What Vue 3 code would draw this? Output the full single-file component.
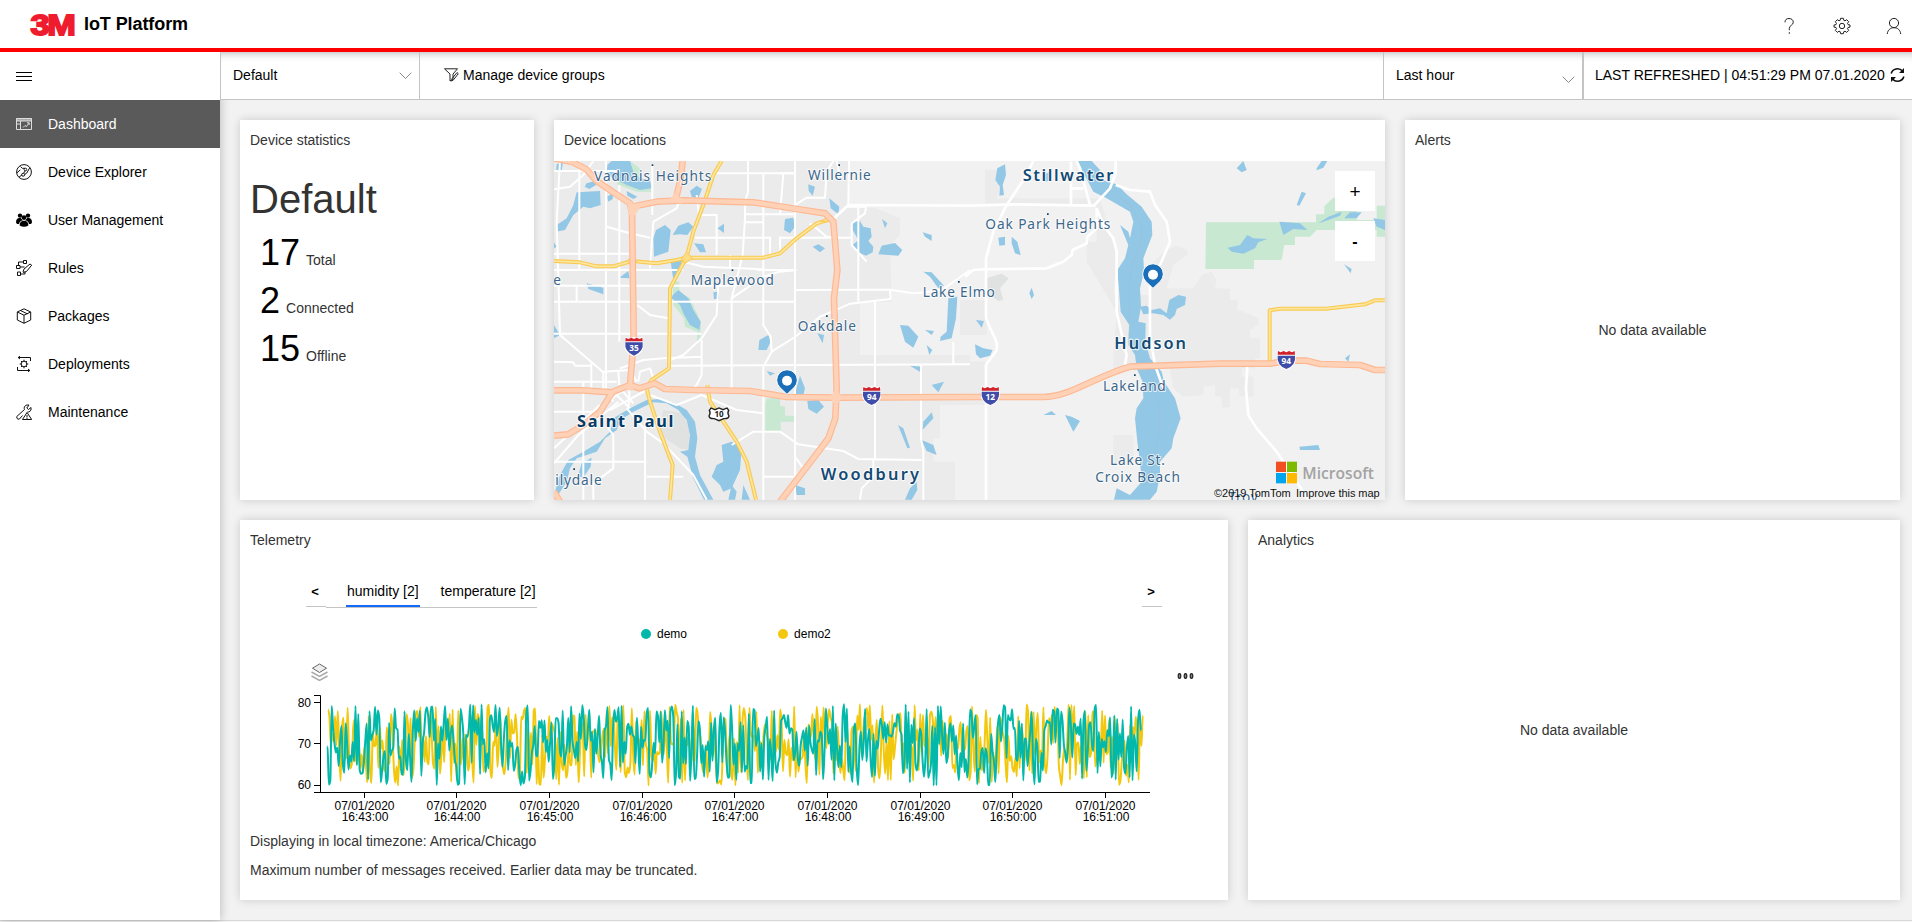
<script setup>
const nav = [
  { id: 'dashboard', label: 'Dashboard', active: true },
  { id: 'explorer', label: 'Device Explorer' },
  { id: 'users', label: 'User Management' },
  { id: 'rules', label: 'Rules' },
  { id: 'packages', label: 'Packages' },
  { id: 'deployments', label: 'Deployments' },
  { id: 'maintenance', label: 'Maintenance' },
]

const stats = [
  { value: 17, label: 'Total' },
  { value: 2, label: 'Connected' },
  { value: 15, label: 'Offline' },
]

const ticks = [
  { x: 74.5, time: '16:43:00' },
  { x: 166.5, time: '16:44:00' },
  { x: 259.5, time: '16:45:00' },
  { x: 352.5, time: '16:46:00' },
  { x: 444.5, time: '16:47:00' },
  { x: 537.5, time: '16:48:00' },
  { x: 630.5, time: '16:49:00' },
  { x: 722.5, time: '16:50:00' },
  { x: 815.5, time: '16:51:00' },
]

// Seeded generator keeps the demo series stable between renders.
function random(seed) {
  let s = seed
  return () => {
    s = (s + 0x6d2b79f5) | 0
    let t = Math.imul(s ^ (s >>> 15), 1 | s)
    t = (t + Math.imul(t ^ (t >>> 7), 61 | t)) ^ t
    return ((t ^ (t >>> 14)) >>> 0) / 4294967296
  }
}

function series(seed, first, start, end) {
  const rnd = random(seed)
  const step = 1.4
  const pts = []
  for (let x = start, i = 0; x <= end; x += step, i++) {
    const v = i === 0 ? first : 60 + rnd() * 20
    pts.push([x, 94.5 - (v - 60) * 4.07])
  }
  const slope = pts.map((p, i) => {
    if (i === 0 || i === pts.length - 1) return 0
    const a = (p[1] - pts[i - 1][1]) / step
    const b = (pts[i + 1][1] - p[1]) / step
    return a * b <= 0 ? 0 : Math.sign(a) * Math.min(Math.abs(a), Math.abs(b), Math.abs(a + b) / 4) * 2
  })
  let d = `M${pts[0][0]},${pts[0][1].toFixed(1)}`
  for (let i = 1; i < pts.length; i++) {
    const k = step / 3
    d += `C${(pts[i - 1][0] + k).toFixed(2)},${(pts[i - 1][1] + slope[i - 1] * k).toFixed(2)} ${(pts[i][0] - k).toFixed(2)},${(pts[i][1] - slope[i] * k).toFixed(2)} ${pts[i][0].toFixed(2)},${pts[i][1].toFixed(2)}`
  }
  return d
}

const demo2 = series(41, 78.6, 38, 853)
const demo = series(7, 69.7, 37.5, 851)

// Map geometry, in thirds of a pixel.
const streets = [
  'M12 48H210M12 296H245M12 345H400M12 392H560M12 440H735M12 536H455M12 103L60 95 100 60 130 18M30 18L20 200 30 540 160 652M88 18V345M80 392V440',
  'M168 18V700M208 90V560M124 625V700M12 620L70 622 75 632 125 632M12 680H200M12 770H160M100 680V1034M205 650L208 690',
  'M307 30V180M390 130L380 160 310 200 300 340M440 120L447 180M500 55H735M594 18V110L585 140V190L578 300 545 430V700M640 55V510L662 545 665 590 640 635V1034M735 18V1034',
  'M585 178H735M585 202H640M435 248H660M690 248H850M780 205L800 220 830 246H850M735 345H620M400 320L460 335 640 343M740 345L690 350 640 365 545 430',
  'M735 150L770 128H825L830 50 850 18M735 55H690M868 55L860 18 M895 150L897 18 M735 405L940 404 1020 404 1090 415 1130 412 1180 402 1260 345M1020 404L1022 432 900 446 855 466 810 485 735 546 665 590',
  'M360 632L1260 628M975 440V912M925 155V440M890 155L948 155 945 175 905 205 905 270 950 320M850 248H905M1113 628V850L1120 890V1034M1210 560V628',
  'M12 925L85 840 205 740M12 880L150 750M160 650V700L190 740M210 640L280 615 340 610 455 605M455 555V660L440 690 420 710M455 550L500 480 505 390M455 550L400 600 350 620M262 450L300 480 355 490M170 215L240 235 300 248',
  'M185 705L240 760M205 695L250 745M180 765L290 705M175 740L240 690M160 650L240 645 260 680M265 680L270 650 300 640 310 670M240 690L235 760M300 720L380 750 455 720 560 765 640 775M545 870L610 830 690 830 745 868 880 888 925 912 1115 915M175 820L190 840V940L130 985V1034M12 920H290M285 800V1034M230 760L290 830 340 865 430 960 470 1034M290 965H400M640 965H735M540 300V340M700 55L690 180M690 245V290M660 245V300M500 300V180L447 180M930 1034L935 1000 970 965V912M735 905L760 940 740 960',
]
const bigStreets = [
  'M850 192L895 150 1260 152 1390 148 1632 152 1680 100 1697 55V18',
  'M1308 1034V628M1308 310L1330 230 1370 150 1430 60 1450 18M1245 365L1270 345 1300 343 1490 340 1540 320 1565 300 1568 285 1610 265 1612 245 1640 220V160',
  'M1308 310V490Q1320 520 1335 550 1350 580 1330 600L1308 628',
  'M1620 150L1590 40 1580 18M1563 150V20M1563 100H1600M1640 160L1660 210 1690 250 1700 290V470L1720 560 1730 600 1725 630M1697 90L1740 105 1800 110 1815 150 1850 200 1860 260 1830 330 1800 370V540L1815 630 1840 700',
  'M2092 635L2088 700 2095 780 2120 820 2180 890 2240 980 2275 1034',
]
const yellow = [
  'M515 18L490 60 460 150 430 230 410 305 360 400 357 640 305 675 290 700 300 740 330 830 368 930 360 1034',
  'M12 318L90 322 140 334 190 334 245 318 320 325 380 315 410 308 640 308 690 295 740 250 800 205 830 196',
  'M472 690L480 740 520 800 560 860 590 920 618 1034',
]
const yellowEast = ['M929 635V466L960 461H1098L1215 448 1245 436H1280']
const orange = [
  'M12 10L70 22 110 44 140 78 190 112 240 145 246 175 250 460 251 560 240 690',
  'M398 18L390 80 378 130M246 155L320 140 400 136 610 142 740 162 825 175 850 200 862 345 852 430 860 700 856 790 835 850 790 910 690 1040',
  'M12 706H100L185 712 240 690 268 700 315 685 345 702 430 705 600 708 710 726 860 728 1260 726 1480 726C1560 726 1640 662 1740 635L2010 626 2160 626 2215 617 2270 617 2310 627 2430 630 2475 645H2510',
  'M12 842L55 838 100 810 150 770 185 715M12 1010L30 1040',
]
const lakes = [
  'M80 112L150 108 152 150 120 160 100 155 70 180 45 225 18 230 20 210 50 190 70 150Z',
  'M172 30L185 18H240L250 50 270 70 300 75 304 100 270 105 230 90 190 70 170 55ZM20 28L40 18 35 45 18 52Z',
  'M110 85L135 78 138 90 118 102 104 95ZM230 108L262 125 250 132 232 122ZM172 125L190 112 188 132 175 140Z',
  'M318 225L345 210 362 225 355 290 312 305 310 250ZM368 240L385 212 415 202 430 215 412 240 390 238Z',
  'M420 108L440 92 456 102 445 130 425 125ZM502 220L522 206V234ZM432 265L460 268 468 292 450 292ZM362 318L395 315 392 350 370 375Z',
  'M368 420L385 405 415 430 430 465 452 500 448 525 420 510 400 475 390 450 365 430ZM110 385L160 398 160 418 115 402ZM208 368L235 348 238 370Z',
  'M775 88L795 95 788 122 776 108ZM838 130L868 155 865 178 842 160ZM705 192L730 188 735 215 720 235 702 225ZM788 275L805 268 825 280 810 292Z',
  'M908 200L930 198 940 215 962 220 965 245 955 258 970 275 968 292 948 302 920 290 908 270 925 255 908 225ZM985 298L995 272 1035 264 1057 285 1045 302Z',
  'M996 192L1012 205 1005 220ZM1118 232L1145 240 1145 258 1125 245ZM1120 350L1145 352 1182 392 1165 400 1140 365Z',
  'M1195 430L1222 425 1218 490 1205 550 1170 558 1172 545 1190 530ZM1050 510L1075 512 1105 545 1090 578 1065 560ZM1125 525L1152 528 1145 540ZM1130 570L1147 585 1138 600Z',
  'M628 555L655 540 662 560 650 585 625 585ZM490 412L505 410 507 432 492 432ZM802 535L822 540 818 565ZM12 510L30 540 12 550ZM12 262L20 275 12 280Z',
  'M650 648L675 655 660 662ZM750 662L765 700 760 720 735 718 742 690ZM772 738L805 735 822 755 800 776 775 762ZM1080 632L1115 635 1112 652Z',
  'M1145 690L1182 680 1165 712ZM1145 772L1150 790 1118 824 1120 800ZM1044 810L1060 820 1080 878 1072 880ZM1115 855L1150 870 1160 900 1130 888Z',
  'M515 870L545 860 575 880 570 945 545 1000 520 1010 510 990 485 965 500 930 520 920ZM535 1034L545 990 560 1010 555 1034ZM575 1034L580 990 600 1034ZM735 990L765 1000 765 1020 740 1020ZM1065 1034L1080 1000 1100 980 1102 1005 1085 1034Z',
  'M12 1020L30 960 55 915 100 890 150 860 180 830 190 790 240 760 290 735 330 732 375 745 410 765 435 800 442 850 435 905 450 960 490 1034 462 1034 430 970 412 905 390 890 415 885 420 840 410 795 385 765 350 745 310 742 250 770 212 795 200 825 165 850 140 890 80 910 60 940 50 980 15 1034Z',
  'M85 960L95 925 125 908 122 935 98 970Z',
]
const lakesEast = [
  'M352 18H395L420 45 410 60 440 80 470 88 500 118 545 155 575 200 577 240 550 310 552 350 540 400 543 455 535 500 557 505 556 560 570 610 605 650 612 680 645 730 662 790 640 850 635 880 600 920 600 960 590 1010 570 1034H462L470 1000 510 1020 545 980 540 920 532 860 525 790 530 760 550 730 548 680 530 640 525 600 505 570 508 510 482 470 475 380 472 345 495 310 505 270 480 210 505 230 510 250 520 200 510 170 440 130 400 110Z',
  'M112 40L135 28 138 60 128 90 132 120 118 122 120 95 106 75ZM115 248L135 245 135 270 118 272ZM155 245L172 260 182 300 165 295 155 265ZM215 398L222 420 215 432 208 415ZM48 495L72 498 65 518ZM45 568L70 580 98 585 90 602 60 610 48 598Z',
  'M540 455L560 452 575 465 600 460 620 475 628 435 655 420 678 425 675 450 650 462 645 480 630 494 610 480 580 475 550 478ZM830 40L850 18 860 45 845 52ZM1070 40L1085 18H1102L1090 38 1070 46ZM1010 150L1025 110 1038 115 1018 152Z',
  'M803 278L840 270 862 240 880 250 922 252 895 262 885 280 850 296 815 290ZM958 200L1020 205 1042 225 1000 222 970 240ZM1075 205L1105 185 1145 170 1140 182 1090 200ZM1152 190L1170 172 1205 172 1190 190ZM1240 190L1275 195V225L1250 215Z',
  'M1152 328L1175 342 1172 355ZM1155 610L1170 598 1165 620ZM250 780L275 768 288 780ZM315 780L335 785 360 798 340 830 330 810ZM1018 875L1075 870 1080 885H1020Z',
  'M248 60L270 50 268 78 252 80Z',
]

const shields = [
  { x: 252, y: 574, n: '35' },
  { x: 965, y: 722, n: '94' },
  { x: 1321, y: 722, n: '12' },
  { x: 2209, y: 614, n: '94' },
]
const pins = [
  { x: 711, y: 680 },
  { x: 1809, y: 362 },
]
const places = [
  { t: 'Vadnais Heights', x: 132, y: 77, w: 352, dot: [307, 30] },
  { t: 'Willernie', x: 774, y: 75, w: 188, dot: [867, 30] },
  { t: 'Maplewood', x: 422, y: 391, w: 250, dot: [547, 345] },
  { t: 'Oakdale', x: 743, y: 528, w: 175, dot: [830, 483] },
  { t: 'Lake Elmo', x: 1118, y: 427, w: 216, dot: [1226, 380] },
  { t: 'Oak Park Heights', x: 1306, y: 223, w: 375, dot: [1493, 177] },
  { t: 'Lakeland', x: 1659, y: 707, w: 188, dot: [1754, 660] },
  { t: 'Lake St.', x: 1680, y: 930, w: 165, dot: [1764, 884] },
  { t: 'Croix Beach', x: 1636, y: 981, w: 254 },
  { t: 'ilydale', x: 16, y: 989, w: 139, dot: [72, 942] },
  { t: 'e', x: 10, y: 391, w: 20 },
]
const cities = [
  { t: 'Saint Paul', x: 81, y: 817, w: 289, bold: true },
  { t: 'Woodbury', x: 812, y: 975, w: 295 },
  { t: 'Stillwater', x: 1418, y: 77, w: 272 },
  { t: 'Hudson', x: 1693, y: 583, w: 215 },
]
</script>

<template>
  <div class="app">
    <header class="topbar">
      <svg class="logo" width="46" height="24" viewBox="0 0 46 24">
        <text x="1.5" y="22.2" textLength="43" lengthAdjust="spacingAndGlyphs">3M</text>
      </svg>
      <h1 class="brand">IoT Platform</h1>
      <div class="actions">
        <svg width="18" height="18" viewBox="0 0 18 18" class="line">
          <path d="M5 5.3C5 2.8 6.5 1.5 9 1.5S13.300 3 13.300 5.200C13.300 8.200 9.300 8.300 9.300 11.500V13.200M9.300 15.200V16.800" />
        </svg>
        <svg width="18" height="18" viewBox="0 0 18 18" class="line">
          <circle cx="9" cy="9" r="2.700" />
          <path d="M7.600 1.300h2.800l.4 2 1.200.5 1.700-1.100 2 2-1.200 1.700.5 1.200 2 .4v2.100l-2 .4-.5 1.200 1.200 1.700-2 2-1.700-1.200-1.200.5-.4 2H7.600l-.4-2-1.200-.5-1.700 1.200-2-2 1.200-1.700-.5-1.200-2-.4V8l2-.4.5-1.200-1.200-1.700 2-2L6 3.800l1.200-.5z" />
        </svg>
        <svg width="18" height="18" viewBox="0 0 18 18" class="line">
          <circle cx="9" cy="6" r="4.600" />
          <path d="M2.300 17C2.600 13 5.500 10.700 9 10.700S15.400 13 15.700 17" />
        </svg>
      </div>
    </header>

    <div class="body">
      <nav class="sidebar">
        <div class="burger"><i></i><i></i><i></i></div>
        <a v-for="n in nav" :key="n.id" class="nav-item" :class="{ active: n.active }">
          <svg width="16" height="16" viewBox="0 0 16 16" class="nav-icon">
            <g v-if="n.id === 'dashboard'">
              <path class="pale" d="M0 2h16v3H0z" />
              <path d="M.5 2.500h15v11H.5zM0 5h16M4.500 5v8.500M.5 8h4M7 11.500l2-2 1.500 1L13 7M11 6.800h2.200V9" />
            </g>
            <g v-else-if="n.id === 'explorer'">
              <circle cx="8" cy="8" r="7.400" />
              <circle cx="9.400" cy="5.500" r="1.300" /><circle cx="7.200" cy="10.700" r="1.500" />
              <path d="M3 13.200L6 10.800M9 4.300L6.300 4.300 4.500 2.600M1 8.800L4.300 5.800M9.200 6.900L7.600 9.200M13.800 3.700L10.800 9 8.700 10.500" />
            </g>
            <g v-else-if="n.id === 'users'" class="solid">
              <circle cx="4" cy="3.600" r="2.200" /><circle cx="12" cy="3.600" r="2.200" /><circle cx="8" cy="5.600" r="2.300" />
              <path d="M0 10.500Q0 6 3.500 6H5Q5.500 7.500 7 8.200 3.500 9 3 12H1ZM16 10.500Q16 6 12.500 6H11Q10.500 7.500 9 8.200 12.500 9 13 12H15ZM3.600 13.500Q3.600 8.800 8 8.800T12.400 13.500Q8 16 3.600 13.500Z" />
            </g>
            <g v-else-if="n.id === 'rules'">
              <path d="M.5 5.500h3.500v3H.5zM7.500.5h3v3h-3zM1.500 12h3v3.500h-3zM2.500 5.500V2h5M4 7h4.500M4.500 14h4.500V11.500M7 12l1-3 6-5 1.700 1.200-5.200 6.300-3.500 1" />
            </g>
            <g v-else-if="n.id === 'packages'">
              <path d="M8 .8L14.700 4v8L8 15.300 1.300 12V4zM1.300 4L8 7.200 14.700 4M8 7.200v8M4.500 2.500L11.300 5.800" />
            </g>
            <g v-else-if="n.id === 'deployments'">
              <path d="M2 1.500H14.500V5M4 0L2.200 1.500 4 3M14 14.500H1.500V11M12 13l1.800 1.500L12 16" />
              <circle cx="8" cy="8" r="2.800" />
              <path d="M8 3.700v1.500M8 10.800v1.500M3.700 8h1.500M10.800 8h1.500M5 5l1 1M10 10l1 1M11 5l-1 1M6 10l-1 1" />
            </g>
            <g v-else>
              <path d="M15 3.500L12.500 5.500 10.800 4 13 1Q9.500.2 8.300 3 8 4.500 8.500 5.500L.8 12.500Q.3 14.500 2 15.200L3.500 15 6.500 11.500M15 3.500Q16 6.500 13 8L11.500 8M11 8.500L6.500 15.500H15.700ZM11 11v2.500M11 14v1" />
            </g>
          </svg>
          <span>{{ n.label }}</span>
        </a>
      </nav>

      <main class="main">
        <div class="toolbar">
          <div class="select group">
            <span>Default</span>
            <svg width="13" height="8" viewBox="0 0 13 8"><path d="M.7.7L6.500 6.500 12.300.7" /></svg>
          </div>
          <div class="manage">
            <svg width="15" height="14" viewBox="0 0 15 14">
              <path d="M.5.8H13.500L9 6V11.500L6 13V6Z" />
              <path d="M7.500 13L8.200 10.500 13 4.500 14.300 5.700 9.500 11.800Z" />
            </svg>
            <span>Manage device groups</span>
          </div>
          <div class="select range">
            <span>Last hour</span>
            <svg width="13" height="8" viewBox="0 0 13 8"><path d="M.7.7L6.500 6.500 12.300.7" /></svg>
          </div>
          <div class="refreshed">
            <span>LAST REFRESHED | 04:51:29 PM 07.01.2020</span>
            <svg width="15" height="16" viewBox="0 0 15 16">
              <path d="M1.200 6.500A6.500 6.200 0 0 1 12.500 4M13.800 9.500A6.500 6.200 0 0 1 2.500 12" />
              <path class="tip" d="M14 1V6H9ZM1 15V10H6Z" />
            </svg>
          </div>
        </div>

        <div class="grid">
          <div class="row">
            <section class="card stats">
              <h2>Device statistics</h2>
              <div class="group-name">Default</div>
              <div v-for="s in stats" :key="s.label" class="stat">
                <b>{{ s.value }}</b><span>{{ s.label }}</span>
              </div>
            </section>

            <section class="card locations">
              <h2>Device locations</h2>
              <div class="map">
                <svg width="831" height="339" viewBox="12 18 2493 1017">
                  <path class="land" d="M12 18H2505V1035H12Z" />
                  <path class="rural" d="M895 18L897 155 975 158 1050 190 1050 240 1020 270 1025 440 930 445V600H1260V18ZM1260 18H2505V1035H1215V920H1150V850H1170V740H1260Z" />
                  <path class="urban" d="M1305 45H1370L1340 130H1650L1700 300 1690 420H1800V330L1850 285 1880 272 1912 285V300L1870 330 1850 400H1930L1955 360 1985 350 2000 375 1995 400 2040 402V435H2062V465L2085 472 2125 490V510L2100 525V550H2130V610H2115V640L2075 640V665H2110V724H2070L2065 700H2040V757H2015V725L1995 722V690L1960 695V720L1900 725 1870 700 1860 640H1690V760H1690V840H1750V930H1690V600L1700 470 1610 320V260H1640V150H1305ZM1230 435H1310V540H1230ZM1110 620H1310V750H1110Z" />
                  <path class="industry" d="M340 765L400 775 420 830 415 885 390 880 345 850 325 820ZM1308 370L1355 356 1376 370 1350 400 1360 435 1345 438 1308 410Z" />
                  <path class="park" d="M240 18L270 40 272 70 305 85V110H260L200 88ZM368 378L388 380V410L420 430 452 500V545L440 560 442 530 405 515 402 490 370 450ZM650 730H690V752L705 755V782H732V800H692V830H646V745Z" />
                  <path class="park" d="M1968 202H2298V178H2323V153L2350 128H2420V195H2480V152H2505V245H2480V225H2325L2300 225 2280 245H2235V270H2203L2195 315H2112V342H1966Z" />
                  <path v-for="(d, i) in lakes" :key="'l' + i" class="water" :d="d" />
                  <g transform="translate(1230 0)">
                    <path v-for="(d, i) in lakesEast" :key="i" class="water" :d="d" />
                    <path class="border" d="M390 65L460 115 510 150 545 210V250L520 320 505 400 510 480 505 560 550 620 580 680 600 780 590 880 565 980 510 1030" />
                  </g>
                  <path v-for="(d, i) in streets" :key="'s' + i" class="street" :d="d" />
                  <path v-for="(d, i) in bigStreets" :key="'b' + i" class="street big" :d="d" />
                  <path v-for="(d, i) in yellow" :key="'ye' + i" class="y-edge" :d="d" />
                  <path v-for="(d, i) in yellow" :key="'y' + i" class="y-fill" :d="d" />
                  <path class="y-fill junction" d="M232 318L246 302 262 318 246 330ZM395 310L410 292 428 310 405 325ZM812 200L835 185 840 200Z" />
                  <g transform="translate(1230 0)">
                    <path v-for="(d, i) in yellowEast" :key="i" class="y-edge" :d="d" />
                    <path v-for="(d, i) in yellowEast" :key="'f' + i" class="y-fill" :d="d" />
                  </g>
                  <path v-for="(d, i) in orange" :key="'oe' + i" class="o-edge" :d="d" />
                  <path v-for="(d, i) in orange" :key="'o' + i" class="o-fill" :d="d" />
                  <path class="junction-o" d="M232 142L262 148 272 154 256 180H237ZM360 132L376 112 390 128 415 138 390 146ZM838 728L856 705 878 726 858 752ZM222 698L240 680 258 696 242 708Z" />

                  <g v-for="(s, i) in shields" :key="'sh' + i" :transform="`translate(${s.x} ${s.y})`">
                    <path class="shield-rim" d="M-27-28L-14-25 0-28 14-25 27-28 28 4Q24 22 0 31-24 22-28 4Z" />
                    <path class="shield-blue" d="M-26-12H26Q30 16 0 28-30 16-26-12Z" />
                    <path class="shield-red" d="M-25-26L-17-22-8-26 0-22 8-26 17-22 25-26 26-15H-26Z" />
                    <text class="shield-n" x="0" y="13">{{ s.n }}</text>
                  </g>
                  <g transform="translate(507 778)">
                    <path class="us-route" d="M-29-12L-24-19-12-14 0-19 12-14 24-19 29-12Q24-4 30 5 28 14 14 13L0 19-14 13Q-28 14-30 5-24-4-29-12Z" />
                    <text class="us-n" x="0" y="9">10</text>
                  </g>

                  <g v-for="p in places" :key="p.t">
                    <path v-if="p.dot" class="dot" :d="`M${p.dot[0] - 2} ${p.dot[1] - 2}h5v5h-5z`" />
                    <text class="place" :x="p.x" :y="p.y" :textLength="p.w">{{ p.t }}</text>
                  </g>
                  <text v-for="c in cities" :key="c.t" class="city" :class="{ capital: c.bold }" :x="c.x" :y="c.y" :textLength="c.w">{{ c.t }}</text>
                  <text class="place" x="2035" y="1042" textLength="88">Troy</text>

                  <g v-for="(p, i) in pins" :key="'p' + i" :transform="`translate(${p.x} ${p.y})`">
                    <path class="pin" d="M0 38L-22 17A31 31 0 1 1 22 17Z" />
                    <circle class="pin-hole" r="15" cy="-3" />
                  </g>

                  <g transform="translate(1230 0)">
                    <path fill="#f25022" d="M948 920h30v31h-30z" /><path fill="#7fba00" d="M981 920h30v31h-30z" />
                    <path fill="#00a4ef" d="M948 954h30v31h-30z" /><path fill="#ffb900" d="M981 954h30v31h-30z" />
                    <text class="ms" x="1027" y="972" textLength="215" lengthAdjust="spacingAndGlyphs">Microsoft</text>
                    <text class="credit" x="762" y="1026" textLength="230">©2019 TomTom</text>
                    <text class="credit" x="1008" y="1026" textLength="251">Improve this map</text>
                  </g>
                </svg>
                <div class="zoom"><button>+</button><button>-</button></div>
              </div>
            </section>

            <section class="card alerts">
              <h2>Alerts</h2>
              <div class="empty">No data available</div>
            </section>
          </div>

          <div class="row">
            <section class="card telemetry">
              <h2>Telemetry</h2>
              <div class="tabs">
                <button class="arrow">&lt;</button>
                <div class="tablist">
                  <span class="tab on">humidity [2]</span>
                  <span class="tab">temperature [2]</span>
                </div>
                <button class="arrow next">&gt;</button>
              </div>
              <div class="legend">
                <span><i class="teal"></i>demo</span>
                <span><i class="gold"></i>demo2</span>
              </div>
              <div class="tools">
                <svg width="17" height="19" viewBox="0 0 17 19">
                  <path class="sheet low" d="M.5 13L8.500 17.500 16.500 13" />
                  <path class="sheet low" d="M.5 9L8.500 13.500 16.500 9" />
                  <path class="sheet" d="M8.500 1L15.500 5.200 8.500 9.500 1.500 5.200Z" />
                </svg>
                <svg width="17" height="8" viewBox="0 0 17 8">
                  <ellipse v-for="x in [2.500, 8.500, 14.500]" :key="x" class="more" :cx="x" cy="4" rx="1.300" ry="2.400" />
                </svg>
              </div>
              <svg class="chart" width="900" height="140" viewBox="0 0 900 140">
                <path class="serie gold-line" :d="demo2" />
                <path class="serie teal-line" :d="demo" />
                <path class="axis" d="M24 4.500H30.500V101.500H24M24 11.500H30M24 52.500H30M24 94.500H30M30 101.500H860" />
                <text class="ylab" x="21" y="16">80</text>
                <text class="ylab" x="21" y="57">70</text>
                <text class="ylab" x="21" y="98">60</text>
                <g v-for="t in ticks" :key="t.time">
                  <path class="axis" :d="`M${t.x} 101V107`" />
                  <text class="xlab" :x="t.x" y="119">07/01/2020</text>
                  <text class="xlab" :x="t.x + .5" y="130">{{ t.time }}</text>
                </g>
              </svg>
              <p>Displaying in local timezone: America/Chicago</p>
              <p>Maximum number of messages received. Earlier data may be truncated.</p>
            </section>

            <section class="card analytics">
              <h2>Analytics</h2>
              <div class="empty">No data available</div>
            </section>
          </div>
        </div>
      </main>
    </div>
    <div class="bottom-edge"></div>
  </div>
</template>

<style>
body { margin: 0; overflow: hidden; }
</style>

<style scoped>
.app { height: 922px; display: flex; flex-direction: column; background: #fff; font-family: "Liberation Sans", Arial, sans-serif; font-size: 14px; line-height: 20px; color: #000; overflow: hidden; }
svg { display: block; flex: none; }
button { font: inherit; border: 0; background: #fff; padding: 0; color: #000; }

.topbar { box-sizing: border-box; height: 52px; flex: none; display: flex; align-items: flex-start; padding-left: 29px; border-bottom: 4px solid #f00; background: #fff; position: relative; z-index: 2; }
.logo { margin-top: 13px; overflow: visible; }
.logo text { font: bold 29.500px "Liberation Sans", sans-serif; fill: #ee1c2e; stroke: #ee1c2e; stroke-width: 1.800px; letter-spacing: -2px; }
.brand { margin: 14px 0 0 9px; font-size: 18px; line-height: 20px; font-weight: bold; letter-spacing: -.08px; }
.actions { margin: 17px 9px 0 auto; display: flex; gap: 34.500px; }
.line { fill: none; stroke: #222; stroke-width: 1px; }

.body { flex: 1; display: flex; min-height: 0; }
.sidebar { width: 220px; flex: none; background: #fff; box-shadow: 0 0 10px rgba(0, 0, 0, .25); position: relative; }
.burger { height: 48px; box-sizing: border-box; padding: 20px 16px 0; display: flex; flex-direction: column; gap: 3px; }
.burger i { width: 16px; height: 1px; background: #000; }
.nav-item { height: 48px; display: flex; align-items: center; padding-left: 16px; gap: 16px; }
.nav-item.active { background: #5a5a5a; color: #fff; }
.nav-icon { fill: none; stroke: #111; stroke-width: 1px; }
.active .nav-icon { stroke: #ddd; }
.pale { fill: #aaa; stroke: none; }
.solid { fill: #000; stroke: none; }

.main { flex: 1; background: #f2f2f2; min-width: 0; }
.toolbar { box-sizing: border-box; position: relative; height: 48px; display: flex; background: #fff; box-shadow: inset 0 9px 8px -8px rgba(0, 0, 0, .3); border-bottom: 1px solid #c4c4c4; border-left: 1px solid #c4c4c4; line-height: 20px; }
.select { box-sizing: border-box; display: flex; justify-content: space-between; padding: 0 7px 0 12px; }
.select span, .manage span, .refreshed span { margin-top: 13px; line-height: 20px; }
.select svg { fill: none; stroke: #888; margin-top: 20px; }
.group { width: 199px; border-right: 1px solid #c4c4c4; }
.manage { display: flex; padding-left: 24px; gap: 4px; flex: 1; }
.manage svg { fill: none; stroke: #222; margin-top: 16px; }
.range { width: 201px; border-left: 1px solid #c4c4c4; border-right: 2px solid #c4c4c4; }
.range svg { margin-top: 24px; }
.refreshed { box-sizing: border-box; width: 328px; padding-left: 11px; display: flex; gap: 5px; white-space: nowrap; }
.refreshed svg { fill: none; stroke: #111; stroke-width: 1.600px; margin-top: 15px; }
.refreshed .tip { fill: #111; stroke: none; }

.grid { padding: 20px 12px 20px 20px; display: flex; flex-direction: column; gap: 20px; }
.row { display: flex; gap: 20px; height: 380px; }
.card { box-sizing: border-box; background: #fff; box-shadow: 0 0 9px rgba(0, 0, 0, .16); padding: 10px; color: #333; display: flex; flex-direction: column; }
.card h2 { margin: 0; font-size: 14px; line-height: 20px; font-weight: normal; flex: none; }
.stats { width: 294px; }
.group-name { font-size: 40px; line-height: 48px; margin-top: 25px; }
.stat { display: flex; align-items: baseline; gap: 6px; height: 48px; line-height: 48px; padding-left: 10px; }
.stat:nth-of-type(2) { margin-top: 6px; }
.stat b { font-weight: normal; font-size: 36px; color: #000; }
.stat span { font-size: 14px; }
.locations { width: 831px; padding: 0; }
.locations h2 { height: 41px; box-sizing: border-box; padding: 10px; }
.alerts { width: 495px; }
.telemetry { width: 988px; }
.telemetry > * { flex: none; }
.analytics { width: 652px; }
.empty { flex: 1; display: flex; align-items: center; justify-content: center; }

.map { position: relative; height: 339px; }
.zoom { position: absolute; right: 10px; top: 10px; display: flex; flex-direction: column; gap: 10px; }
.zoom button { width: 40px; height: 40px; font: bold 16px/42px "Liberation Sans", sans-serif; }
.zoom button:first-child { font-weight: normal; font-size: 19px; }
.land { fill: #ebebeb; }
.rural { fill: #f1f1f1; }
.urban { fill: #ebebeb; }
.industry { fill: #dfe2e1; }
.park { fill: #c8e8d1; }
.water { fill: #93c7e6; }
.border { fill: none; stroke: #a4b9c6; stroke-width: 2; stroke-dasharray: 3 3; }
.street { fill: none; stroke: #fff; stroke-width: 6; stroke-linejoin: round; }
.big { stroke-width: 8; }
.y-edge, .y-fill, .o-edge, .o-fill { fill: none; stroke-linejoin: round; }
.y-edge { stroke: #f9ca50; stroke-width: 12; }
.y-fill { stroke: #fee6a0; stroke-width: 5; }
.junction { fill: #fddd85; stroke: #f9ca50; stroke-width: 3; }
.o-edge { stroke: #fdb892; stroke-width: 20; }
.o-fill { stroke: #ffd2b8; stroke-width: 13; }
.junction-o { fill: #ffd2b8; }
.shield-rim { fill: #fff; }
.shield-blue { fill: #3f4da8; }
.shield-red { fill: #d1222c; }
.shield-n { font: bold 25px "Noto Sans", sans-serif; fill: #fff; text-anchor: middle; }
.us-route { fill: #fff; stroke: #222; stroke-width: 4; }
.us-n { font: bold 24px "Noto Sans", sans-serif; fill: #222; text-anchor: middle; }
.place { font: 41px "Noto Sans", sans-serif; fill: #3c678c; stroke: rgba(255, 255, 255, .75); stroke-width: 6px; paint-order: stroke; stroke-linejoin: round; }
.city { font: 600 49px "Noto Sans", sans-serif; fill: #134a75; stroke: rgba(255, 255, 255, .75); stroke-width: 7px; paint-order: stroke; stroke-linejoin: round; }
.capital { font-weight: bold; fill: #063b67; }
.dot { fill: #123e63; }
.pin { fill: #1b6fb8; stroke: #fff; stroke-width: 3px; }
.pin-hole { fill: #fff; }
.ms { font: 600 51px "Open Sans", sans-serif; fill: #a3a3a3; }
.credit { font: 33px "Liberation Sans", sans-serif; fill: #111; }

.empty { padding-top: 20px; }
.tabs { display: flex; align-items: flex-start; margin: 24px 56px 0; height: 34px; }
.arrow { width: 20px; height: 33px; box-sizing: border-box; border-bottom: 1px solid #c4c4c4; font-weight: bold; font-size: 13px; line-height: 20px; padding: 4px 2px 0 0; display: block; text-align: center; }
.next { margin-left: auto; }
.tablist { display: flex; gap: 20px; height: 33px; border-bottom: 1px solid #c4c4c4; padding-left: 20px; color: #000; }
.tab { padding: 7px 1px 4px; height: 20px; line-height: 20px; white-space: nowrap; }
.tab.on { border-bottom: 2px solid #136bfb; }
.legend { display: flex; justify-content: flex-start; margin: 16px 0 0 391px; color: #000; font-size: 12px; line-height: 20px; gap: 91px; }
.legend span { display: flex; align-items: center; }
.legend i { width: 10px; height: 10px; border-radius: 50%; margin-right: 6px; }
.teal { background: #01b8aa; }
.gold { background: #f2c80f; }
.tools { display: flex; justify-content: space-between; align-items: flex-start; padding: 19px 24px 0 61px; height: 28px; box-sizing: content-box; }
.tools svg:last-child { margin-top: 9px; }
.sheet { fill: #eee; stroke: #666; }
.low { fill: none; stroke: #aaa; stroke-width: 1.500px; }
.more { fill: #888; stroke: #222; stroke-width: 1.200px; }
.chart { margin-left: 40px; }
.serie { fill: none; stroke-width: 2px; stroke-linejoin: round; }
.gold-line { stroke: #f2c80f; }
.teal-line { stroke: #01b8aa; }
.axis { fill: none; stroke: #000; }
.ylab, .xlab { font: 12px "Liberation Sans", sans-serif; fill: #000; }
.ylab { text-anchor: end; }
.xlab { text-anchor: middle; }
.telemetry p { margin: 0 0 9px; line-height: 20px; }
.bottom-edge { height: 1px; flex: none; border-top: 1px solid #d8d8d8; background: #f6f6f6; }
</style>
